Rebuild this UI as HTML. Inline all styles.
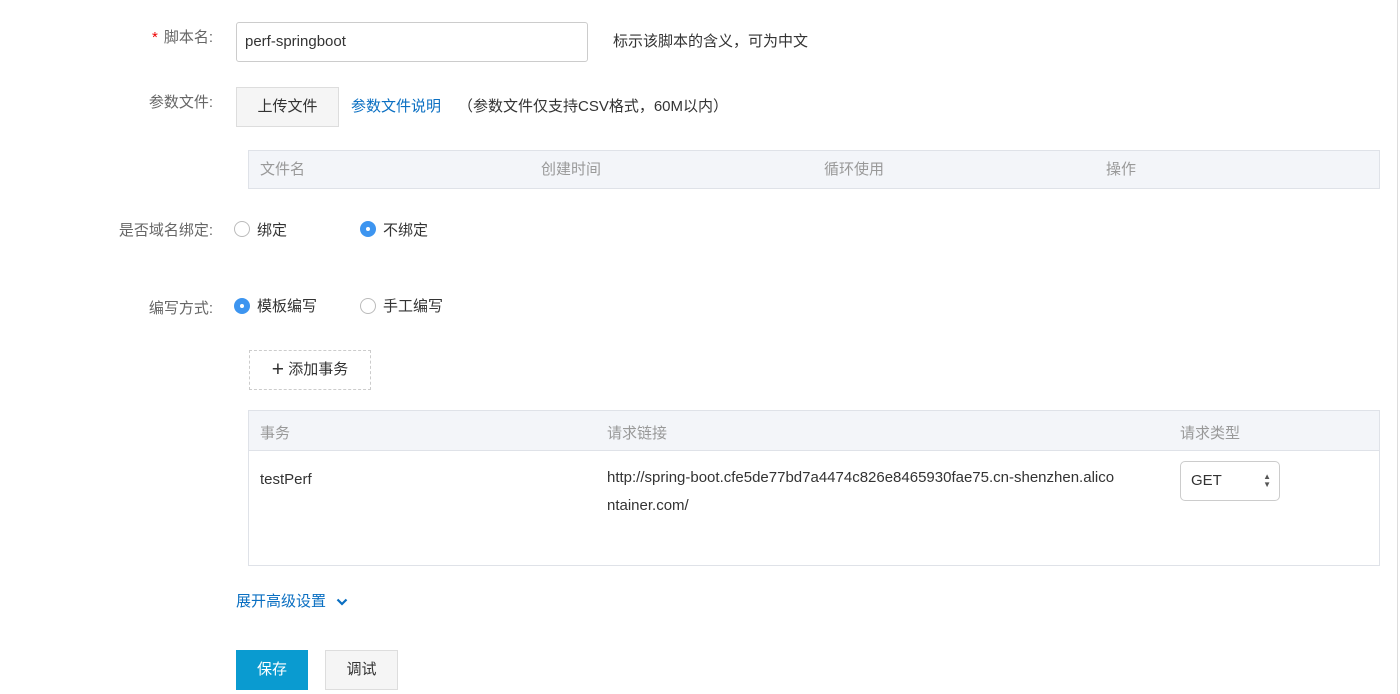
<!DOCTYPE html>
<html><head><meta charset="utf-8"><style>
*{box-sizing:border-box;margin:0;padding:0}
body{width:1400px;height:694px;background:#fff;font-family:"Liberation Sans","Noto Sans CJK SC",sans-serif;font-size:15px;color:#333;position:relative;overflow:hidden}
.a{position:absolute;white-space:nowrap}
.lbl{color:#666;text-align:right;width:200px;left:13px}
.radio{position:absolute;width:16px;height:16px;border-radius:50%;border:1px solid #bbb;background:#fff}
.radio.on{border:none;background:#3d95f0}
.radio.on::after{content:"";position:absolute;left:6px;top:6px;width:4px;height:4px;border-radius:50%;background:#fff}
.btn{position:absolute;border:1px solid #ddd;background:#f5f5f5;text-align:center;color:#333}
.th{color:#999}
</style></head><body>
<div class="a lbl" style="top:26px"><span style="color:#e00;margin-right:6px">*</span>脚本名:</div>
<div class="a" style="left:236px;top:22px;width:352px;height:40px;border:1px solid #ccc;border-radius:3px;padding:10px 8px;color:#333">perf-springboot</div>
<div class="a" style="left:613px;top:30px">标示该脚本的含义，可为中文</div>

<div class="a lbl" style="top:91px">参数文件:</div>
<div class="btn" style="left:236px;top:87px;width:103px;height:40px;line-height:38px">上传文件</div>
<div class="a" style="left:351px;top:95px;color:#0a6fc2">参数文件说明</div>
<div class="a" style="left:458px;top:95px">（参数文件仅支持CSV格式，60M以内）</div>

<div class="a" style="left:248px;top:150px;width:1132px;height:39px;background:#f3f5f9;border:1px solid #dfe2e8"></div>
<div class="a th" style="left:260px;top:158px">文件名</div>
<div class="a th" style="left:541px;top:158px">创建时间</div>
<div class="a th" style="left:824px;top:158px">循环使用</div>
<div class="a th" style="left:1106px;top:158px">操作</div>

<div class="a lbl" style="top:219px">是否域名绑定:</div>
<div class="radio" style="left:234px;top:221px"></div><div class="a" style="left:257px;top:219px">绑定</div>
<div class="radio on" style="left:360px;top:221px"></div><div class="a" style="left:383px;top:219px">不绑定</div>

<div class="a lbl" style="top:297px">编写方式:</div>
<div class="radio on" style="left:234px;top:298px"></div><div class="a" style="left:257px;top:295px">模板编写</div>
<div class="radio" style="left:360px;top:298px"></div><div class="a" style="left:383px;top:295px">手工编写</div>

<div class="a" style="left:249px;top:350px;width:122px;height:40px;border:1px dashed #ccc;text-align:center;line-height:38px"><span style="font-size:21px;vertical-align:-2px">+</span> 添加事务</div>

<div class="a" style="left:248px;top:410px;width:1132px;height:156px;border:1px solid #dfe2e8"></div>
<div class="a" style="left:249px;top:411px;width:1130px;height:40px;background:#f3f5f9;border-bottom:1px solid #dfe2e8"></div>
<div class="a th" style="left:260px;top:422px">事务</div>
<div class="a th" style="left:607px;top:422px">请求链接</div>
<div class="a th" style="left:1180px;top:422px">请求类型</div>
<div class="a" style="left:260px;top:471px">testPerf</div>
<div class="a" style="left:607px;top:464px;line-height:28px">http://spring-boot.cfe5de77bd7a4474c826e8465930fae75.cn-shenzhen.alico<br>ntainer.com/</div>
<div class="a" style="left:1180px;top:461px;width:100px;height:40px;border:1px solid #ccc;border-radius:5px;padding:10px 10px">GET<span style="position:absolute;right:8px;top:11px;font-size:8px;line-height:8px;color:#555">▲<br>▼</span></div>

<div class="a" style="left:236px;top:590px;color:#0a6fc2">展开高级设置 <svg width="12" height="8" viewBox="0 0 12 8" style="margin-left:6px"><path d="M1.5 1.5L6 6 10.5 1.5" stroke="#0a6fc2" stroke-width="2.2" fill="none"/></svg></div>

<div class="a" style="left:236px;top:650px;width:72px;height:40px;background:#0a9bd0;color:#fff;text-align:center;line-height:40px">保存</div>
<div class="btn" style="left:325px;top:650px;width:73px;height:40px;line-height:38px">调试</div>
<div class="a" style="left:1397px;top:0;width:1px;height:694px;background:#ddd"></div>
</body></html>
